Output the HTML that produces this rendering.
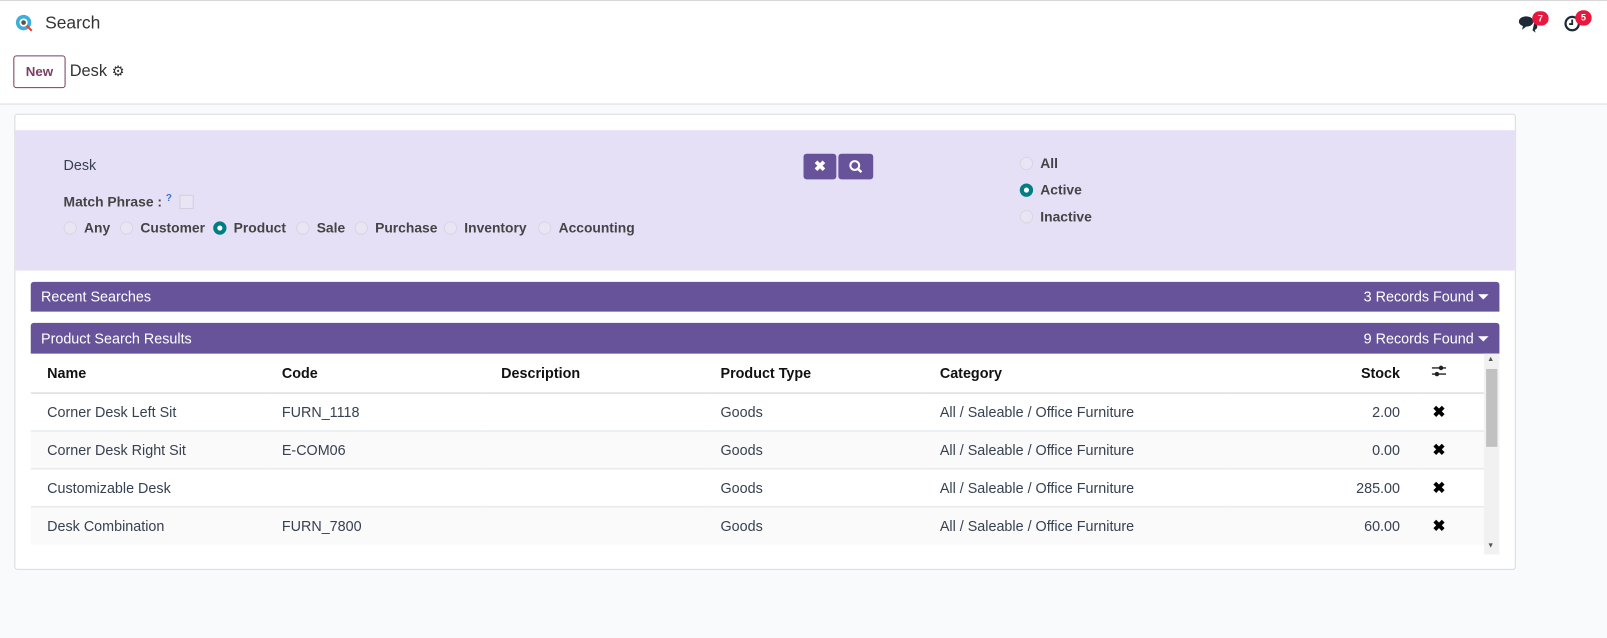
<!DOCTYPE html>
<html><head><style>
*{box-sizing:border-box;margin:0;padding:0}
body{width:1607px;height:637px;background:#f9fafb;font-family:"Liberation Sans",sans-serif;font-size:14px;color:#374151;position:relative;overflow:hidden}
#w{position:absolute;left:0;top:0;width:1568px;height:622px;transform:scale(1.0249);transform-origin:0 0}
.abs{position:absolute}
.top{left:0;top:0;width:1568px;height:102px;background:#fff;border-top:1px solid #d8d8d8;border-bottom:1px solid #dcdde3}
.card{left:14px;top:111px;width:1465px;height:445px;background:#fff;border:1px solid #d8dadd;border-radius:3px}
.panel{left:15px;top:127px;width:1463px;height:137px;background:#e6e0f7}
.bar{left:30px;width:1433px;background:#66539a;color:#fff;font-size:14px;padding-left:10px;line-height:29px;border-radius:3px 3px 0 0}
.bar span{position:absolute;right:10px;top:0}
.radio{display:inline-block;width:13px;height:13px;border-radius:50%;border:1px solid #d8d6e0;background:#e9e5f5;vertical-align:-2px;margin-right:7px}
.radio.on{border:4px solid #017e84;background:#fff}
.rl{position:absolute;top:215px;font-weight:bold;color:#444;font-size:13.5px;white-space:nowrap}
table{border-collapse:collapse;position:absolute;left:30px;top:345px;width:1418px;table-layout:fixed}
td,th{height:37px;padding:0 16px;text-align:left;border-bottom:1px solid #dee2e6;font-size:14px;white-space:nowrap}
th{height:38px;color:#111;font-weight:bold;border-bottom:1px solid #d0d0d0}
tbody tr:nth-child(odd) td{background:#fff}
tbody tr:nth-child(even) td{background:#fafafa}
.r{text-align:right}
.x{font-weight:bold;color:#000;text-align:center;font-size:15px;padding:0 22px 0 0}
</style></head><body><div id="w">
<div class="abs top"></div>
<svg class="abs" style="left:14px;top:13px" width="20" height="20" viewBox="0 0 20 20"><circle cx="9" cy="9" r="7.5" fill="#3bb0d8"/><circle cx="9" cy="9" r="4" fill="#fff"/><circle cx="9" cy="9" r="2.3" fill="#555"/><path d="M12 12l5 5" stroke="#e0463a" stroke-width="2"/></svg>
<div class="abs" style="left:44px;top:13px;font-size:17px;color:#333">Search</div>
<svg class="abs" style="left:1481px;top:14px" width="20" height="18" viewBox="0 0 20 18"><path d="M1 7c0-3 3-5 7-5s7 2 7 5-3 5-7 5l-4 3 1-3.5C2.5 10.5 1 9 1 7z" fill="#1f2937"/><path d="M16 8c2 1 3 2.5 3 4 0 1.5-1 2.7-2.5 3.3l.8 2.5-3-2.2" fill="#1f2937"/></svg>
<div class="abs" style="left:1495px;top:11px;width:16px;height:14px;border-radius:7px;background:#e8173d;color:#fff;font-size:9px;text-align:center;line-height:14px;font-weight:bold">7</div>
<svg class="abs" style="left:1526px;top:14px" width="18" height="18" viewBox="0 0 18 18"><circle cx="8" cy="9" r="6.5" fill="none" stroke="#1f2937" stroke-width="2.2"/><path d="M8 5v4.5H5" stroke="#1f2937" stroke-width="1.8" fill="none"/></svg>
<div class="abs" style="left:1537px;top:10px;width:16px;height:15px;border-radius:8px;background:#e8173d;color:#fff;font-size:9px;text-align:center;line-height:15px;font-weight:bold">5</div>
<div class="abs" style="left:13px;top:54px;width:51px;height:32px;border:1px solid #7b3e63;border-radius:3px;color:#7b3e63;font-weight:bold;font-size:13px;text-align:center;line-height:30px">New</div>
<div class="abs" style="left:68px;top:61px;font-size:16px;color:#333">Desk <span style="font-size:14px">⚙</span></div>
<div class="abs card"></div>
<div class="abs panel"></div>
<div class="abs" style="left:62px;top:153px">Desk</div>
<div class="abs" style="left:62px;top:188px;font-weight:bold;color:#444;font-size:13.5px">Match Phrase : <sup style="color:#3c73d1;font-size:10px">?</sup></div>
<div class="abs" style="left:175px;top:190px;width:14px;height:14px;border:1px solid #d3cfde;background:#e9e5f5"></div>
<div class="rl" style="left:62px"><span class="radio"></span>Any</div>
<div class="rl" style="left:117px"><span class="radio"></span>Customer</div>
<div class="rl" style="left:208px"><span class="radio on"></span>Product</div>
<div class="rl" style="left:289px"><span class="radio"></span>Sale</div>
<div class="rl" style="left:346px"><span class="radio"></span>Purchase</div>
<div class="rl" style="left:433px"><span class="radio"></span>Inventory</div>
<div class="rl" style="left:525px"><span class="radio"></span>Accounting</div>
<div class="abs" style="left:784px;top:150px;width:32px;height:25px;background:#66539a;border-radius:3px;color:#fff;text-align:center;line-height:25px;font-weight:bold">✖</div>
<div class="abs" style="left:818px;top:150px;width:34px;height:25px;background:#66539a;border-radius:3px"><svg width="34" height="25" viewBox="0 0 34 25"><circle cx="16" cy="11.5" r="4.3" fill="none" stroke="#fff" stroke-width="2"/><path d="M19 14.5l3.5 3.5" stroke="#fff" stroke-width="2.4"/></svg></div>
<div class="abs" style="left:995px;top:147px;font-weight:bold;color:#444;line-height:26px;font-size:13.5px"><span class="radio"></span>All<br><span class="radio on"></span>Active<br><span class="radio"></span>Inactive</div>
<div class="abs bar" style="top:275px;height:29px">Recent Searches<span>3 Records Found ⏷</span></div>
<div class="abs bar" style="top:315px;height:30px;line-height:30px">Product Search Results<span>9 Records Found ⏷</span></div>
<table>
<colgroup><col style="width:229px"><col style="width:214px"><col style="width:214px"><col style="width:214px"><col style="width:300px"><col style="width:181px"><col style="width:66px"></colgroup>
<thead><tr><th>Name</th><th>Code</th><th>Description</th><th>Product Type</th><th>Category</th><th class="r">Stock</th><th class="x"><svg width="14" height="12" viewBox="0 0 14 12"><path d="M0 3h14M0 9h14" stroke="#222" stroke-width="1.3"/><circle cx="9" cy="3" r="2.2" fill="#222"/><circle cx="5" cy="9" r="2.2" fill="#222"/></svg></th></tr></thead>
<tbody>
<tr><td>Corner Desk Left Sit</td><td>FURN_1118</td><td></td><td>Goods</td><td>All / Saleable / Office Furniture</td><td class="r">2.00</td><td class="x">✖</td></tr>
<tr><td>Corner Desk Right Sit</td><td>E-COM06</td><td></td><td>Goods</td><td>All / Saleable / Office Furniture</td><td class="r">0.00</td><td class="x">✖</td></tr>
<tr><td>Customizable Desk</td><td></td><td></td><td>Goods</td><td>All / Saleable / Office Furniture</td><td class="r">285.00</td><td class="x">✖</td></tr>
<tr><td>Desk Combination</td><td>FURN_7800</td><td></td><td>Goods</td><td>All / Saleable / Office Furniture</td><td class="r">60.00</td><td class="x">✖</td></tr>
</tbody></table>
<div class="abs" style="left:30px;top:531px;width:1418px;height:10px;background:#fff"></div>
<div class="abs" style="left:1448px;top:345px;width:15px;height:196px;background:#f1f1f1"></div>
<div class="abs" style="left:1450px;top:360px;width:11px;height:76px;background:#c1c1c1"></div>
<div class="abs" style="left:1451px;top:347px;font-size:7px;color:#555">▲</div>
<div class="abs" style="left:1451px;top:529px;font-size:7px;color:#555">▼</div>
</div></body></html>
